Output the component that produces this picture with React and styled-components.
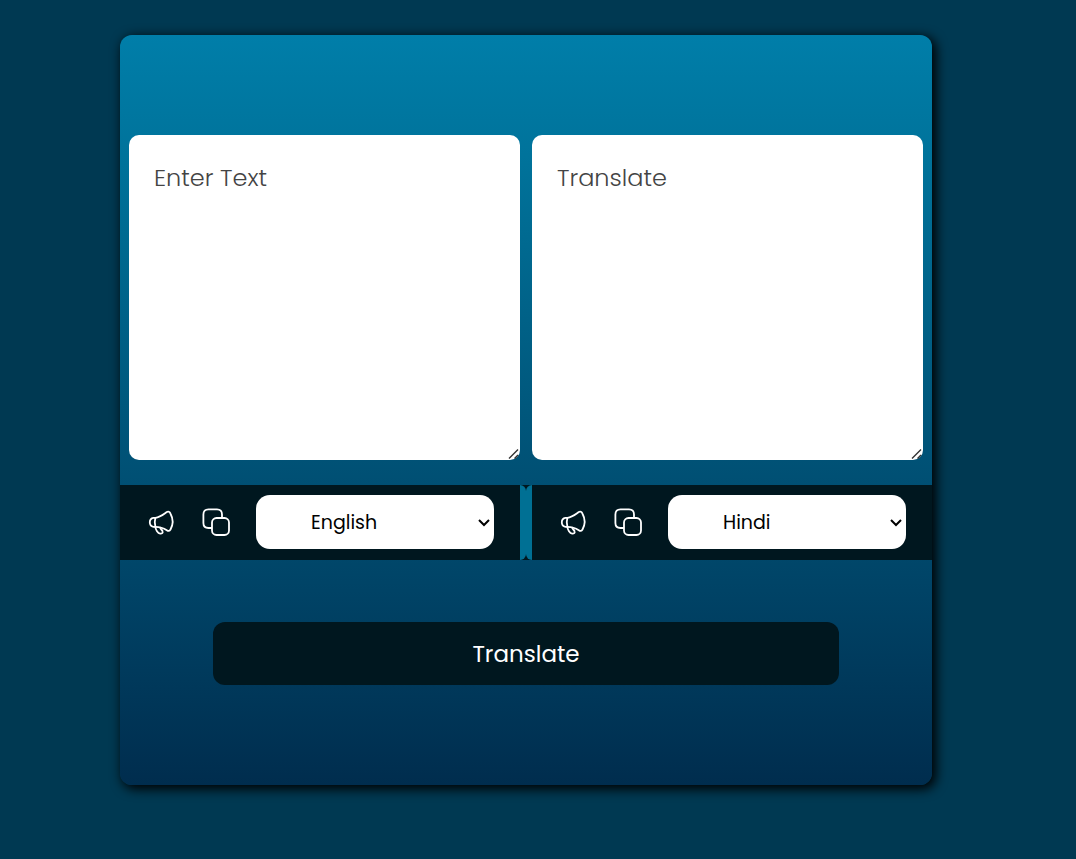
import React from "react";
import styled, { createGlobalStyle } from "styled-components";

const GlobalStyle = createGlobalStyle`
  * { box-sizing: border-box; }
  body {
    margin: 0;
    background: #003952;
    font-family: Poppins, Inter, "Open Sans", sans-serif;
  }
`;

const Page = styled.main`
  min-height: 100vh;
  padding: 35px 144px 35px 120px;
`;

const Card = styled.form`
  display: flex;
  flex-direction: column;
  padding: 100px 0;
  border-radius: 12px;
  background: linear-gradient(#007ea9, #00739b 16%, #004f73 60%, #002d4e);
  box-shadow: 3px 3px 12px 1px #000;
`;

const TextPanels = styled.div`
  display: grid;
  grid-template-columns: 1fr 1fr;
  gap: 12px;
  padding: 0 9px;
`;

const TextBox = styled.textarea`
  display: block;
  width: 100%;
  height: 325px;
  padding: 25px;
  border: 0;
  border-radius: 10px;
  outline: 0;
  background: #fff;
  color: #111;
  font: 300 24px/36px Poppins, Inter, "Open Sans", sans-serif;
  resize: both;

  &::placeholder { color: #444; opacity: 1; }

  &::-webkit-resizer {
    background: url("data:image/svg+xml,%3Csvg xmlns='http://www.w3.org/2000/svg' width='15' height='15' viewBox='0 0 15 15' fill='none' stroke='%23333' stroke-width='1.4'%3E%3Cpath d='M4 13.5L13 4.5M9.5 13.5L13 10'/%3E%3C/svg%3E") no-repeat right bottom;
  }
`;

const ControlBar = styled.div`
  display: grid;
  grid-template-columns: 1fr 1fr;
  margin-top: 25px;
  background: #00171f;
`;

const Controls = styled.div`
  display: flex;
  align-items: center;
  padding: 10px 26px 11px;
  ${({ $side }) =>
    $side === "left"
      ? "border-right: 6px solid #007094; border-radius: 0 6px 6px 0;"
      : "border-left: 6px solid #007094; border-radius: 6px 0 0 6px;"}
`;

const IconButton = styled.button`
  display: grid;
  place-items: center;
  width: 30px;
  height: 30px;
  margin-right: 25px;
  padding: 0;
  border: 0;
  background: none;
  color: #fff;
  cursor: pointer;

  svg { display: block; }
`;

const SelectField = styled.div`
  position: relative;
  flex: 1;
  min-width: 0;

  svg {
    position: absolute;
    top: 24px;
    right: 4px;
    pointer-events: none;
  }
`;

const LanguageSelect = styled.select`
  display: block;
  width: 100%;
  height: 54px;
  padding: 0 20px 0 55px;
  border: 0;
  border-radius: 14px;
  appearance: none;
  background: #fff;
  color: #000;
  font: 400 19px Poppins, Inter, "Open Sans", sans-serif;
`;

const TranslateButton = styled.button`
  align-self: center;
  width: 77%;
  height: 63px;
  margin-top: 62px;
  border: 0;
  border-radius: 12px;
  background: #00171f;
  color: #fff;
  font: 400 23px Poppins, Inter, "Open Sans", sans-serif;
  cursor: pointer;
`;

const Megaphone = () => (
  <svg width="30" height="30" viewBox="0 0 30 30" fill="none" stroke="currentColor" strokeWidth="1.8" strokeLinecap="round" strokeLinejoin="round" aria-hidden="true">
    <path d="M9.4 10.8C14 10.2 17 7.6 20.8 5C22.3 4.1 23.6 4.8 24.5 6.7C27.4 12 27.4 17.2 24.5 22.5C23.5 24.3 22.3 24.3 20.8 23.2C17.2 20.8 14 19.8 9.4 19.8" />
    <path d="M9.4 10.8H7.4C2.6 11.6 2.6 19 7.4 19.8H9.4C8.5 16.8 8.5 13.8 9.4 10.8Z" />
    <path d="M9.4 20C9.6 22.8 11.8 26.2 14.2 26.6C16 26.8 17 25.8 16.6 24.4C16.2 22.8 14.6 22.6 14.2 20.6" />
  </svg>
);

const Copy = () => (
  <svg width="30" height="30" viewBox="0 0 30 30" fill="none" stroke="currentColor" strokeWidth="1.8" strokeLinejoin="round" aria-hidden="true">
    <rect x="11" y="11" width="17" height="17" rx="4.5" />
    <path d="M11 21H7.5C4.4 21 2.4 19.1 2.4 16V7.5C2.4 4.4 4.4 2.4 7.5 2.4H16C19.1 2.4 21 4.4 21 7.5V11" />
  </svg>
);

const Chevron = () => (
  <svg width="12" height="8" viewBox="0 0 12 8" fill="none" stroke="#000" strokeWidth="2" aria-hidden="true">
    <path d="M1 1L6 6L11 1" />
  </svg>
);

function LanguageControls({ side, label, initial }) {
  return (
    <Controls $side={side}>
      <IconButton type="button" aria-label={`Listen to ${label}`}><Megaphone /></IconButton>
      <IconButton type="button" aria-label={`Copy ${label}`}><Copy /></IconButton>
      <SelectField>
        <LanguageSelect aria-label={`${label} language`} defaultValue={initial}>
          <option>English</option>
          <option>Hindi</option>
        </LanguageSelect>
        <Chevron />
      </SelectField>
    </Controls>
  );
}

export default function App() {
  return (
    <>
      <GlobalStyle />
      <Page>
        <Card onSubmit={(event) => event.preventDefault()}>
          <TextPanels>
            <TextBox aria-label="Source text" placeholder="Enter Text" />
            <TextBox aria-label="Translated text" placeholder="Translate" />
          </TextPanels>
          <ControlBar>
            <LanguageControls side="left" label="source" initial="English" />
            <LanguageControls side="right" label="translation" initial="Hindi" />
          </ControlBar>
          <TranslateButton type="submit">Translate</TranslateButton>
        </Card>
      </Page>
    </>
  );
}
